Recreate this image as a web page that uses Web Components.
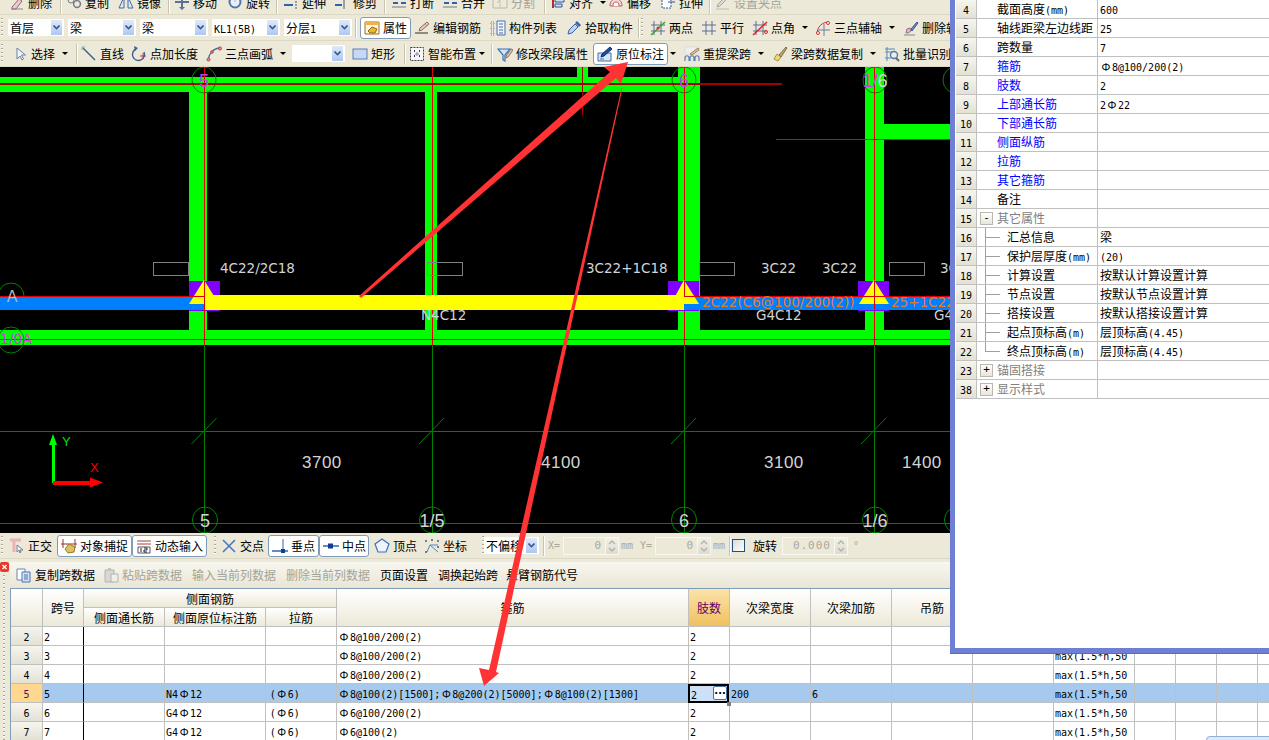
<!DOCTYPE html>
<html lang="zh">
<head>
<meta charset="utf-8">
<title>梁 原位标注</title>
<style>
  html, body { margin: 0; height: 100%; overflow: hidden; background: #ece9d8; }
  body { font: 12px "Noto Sans CJK SC", sans-serif; color: #000; }
</style>
</head>
<body>
<cad-app></cad-app>
<script>
// half width latin like the app's bitmap font, full width rebar sign
const TXT_CSS = `
  .n { font: 10px "DejaVu Sans Mono", monospace; white-space: pre; }
  .bar { display: inline-block; width: 12px; text-align: center; font-size: 11px; }
`;
const fmt = s => s
    .replace(/[\x20-\x7e]+/g, m => `<span class="n">${m}</span>`)
    .replace(/Φ/g, '<span class="bar">Φ</span>');

const ICONS = {
    erase: '<path d="M3 13l7-8 3 2-6 8H3z" fill="#f3c6d0" stroke="#8a6a7a"/><path d="M2 15h12" stroke="#888"/>',
    clip: '<circle cx="5" cy="6" r="3" fill="none" stroke="#778"/><circle cx="11" cy="10" r="3.4" fill="none" stroke="#778" stroke-width="1.5"/>',
    mirror: '<path d="M1 14L6 3v11zM15 14L10 3v11z" fill="#dfe8f5" stroke="#46699c"/>',
    move: '<path d="M8 1v14M1 8h14" stroke="#5a7199" stroke-width="2"/><path d="M8 0l3 3H5zM8 16l3-3H5z" fill="#5a7199"/>',
    rotate: '<circle cx="8" cy="8" r="5.5" fill="#e8eefa" stroke="#5577aa" stroke-width="2"/><path d="M8 3v5" stroke="#d9a" stroke-width="1"/>',
    extend: '<path d="M1 5h9M1 11h9" stroke="#3060b0" stroke-width="2"/><path d="M13 1v14" stroke="#556" stroke-dasharray="2 1"/>',
    trim: '<path d="M1 5h7M1 11h7" stroke="#3060b0" stroke-width="2"/><path d="M10 1v14M14 5h-3" stroke="#556"/>',
    brk: '<path d="M1 4h14M1 13h14" stroke="#778" stroke-width="1"/><path d="M2 9h5M10 9h5" stroke="#3060b0" stroke-width="2"/>',
    split: '<path d="M1 4h14v10H1zM5 9l6-6" fill="none" stroke="#b8b8b0"/><path d="M8 1v14" stroke="#c4c4bc"/>',
    align: '<path d="M3 2v12" stroke="#b03030" stroke-width="2"/><path d="M5 5h9v3H5zM5 10h7v3H5z" fill="#cfe0f5" stroke="#2f55a0"/>',
    offset: '<path d="M2 12c0-5 3-7 6-7s6 2 6 7z" fill="#f6d8d8" stroke="#c06060"/><path d="M5 12c0-3 1-4 3-4s3 1 3 4" fill="#fff" stroke="#c06060"/>',
    stretch: '<path d="M2 2h9v12H2z" fill="#fff" stroke="#2f55a0" stroke-dasharray="2 1"/><path d="M8 8h7" stroke="#2f55a0"/>',
    grippoint: '<path d="M2 13l3-1 8-8-2-2-8 8z" fill="#d8d8d0" stroke="#aaa"/><path d="M1 15h13" stroke="#bbb"/>',
    prop: '<path d="M1 2h14v12H1z" fill="#fff6e0" stroke="#a06a20"/><path d="M1 2h14v3H1z" fill="#f0b050"/><path d="M4 11l4-4 5 2-2 4H6z" fill="#e8b830" stroke="#8a6a10"/>',
    editbar: '<path d="M1 13h13" stroke="#665" stroke-width="1.4"/><path d="M5 11l1-3 7-6 2 2-7 6z" fill="#f0c8b8" stroke="#887060"/><path d="M11 4l2 2" stroke="#c99030"/>',
    list: '<path d="M7 1h8v14H7z" fill="#eef3fb" stroke="#4a6ea8"/><path d="M9 4h4M9 7h4M9 10h4M9 13h4" stroke="#4a6ea8"/><path d="M1 2h3v3H1zM1 7h3v3H1zM1 12h3v3H1z" fill="none" stroke="#6a7f9f" stroke-dasharray="1 1"/>',
    pick: '<path d="M2 14l1-4 6-6 3 3-6 6z" fill="#bcd3f2" stroke="#3a64a8"/><path d="M9 3l2-2 4 4-2 2z" fill="#3a64a8"/>',
    twopt: '<path d="M4 1v14M11 1v14M1 5h14M1 11h14" stroke="#5a6d99"/><path d="M1 15L15 2" stroke="#40a030" stroke-width="1.5"/><circle cx="8" cy="8" r="1.5" fill="#d03030"/>',
    parallel: '<path d="M5 1v14M11 1v14M1 5h14M1 11h14" stroke="#5a6d99"/>',
    ptangle: '<path d="M4 1v14M11 1v14M1 5h14M1 11h14" stroke="#5a6d99"/><path d="M1 15L15 2" stroke="#e02020" stroke-width="1.4"/><circle cx="14" cy="12" r="1.5" fill="none" stroke="#e02020"/>',
    arcaxis: '<path d="M2 14C2 7 7 2 14 2" fill="none" stroke="#d83030"/><circle cx="3" cy="13" r="1.5" fill="#fff" stroke="#d83030"/><circle cx="13" cy="3" r="1.5" fill="#fff" stroke="#d83030"/><path d="M9 4v12M3 10h12" stroke="#6a7fa8"/>',
    brush: '<path d="M1 15h11" stroke="#888"/><path d="M3 13l1-4 3-1 1 3-3 2z" fill="#e8b8c8" stroke="#907080"/><path d="M8 9l6-7 1 1-6 8z" fill="#7088b8" stroke="#405a90"/>',
    cursor: '<path d="M5 2v11l3-3 2 4 1.500-1-2-4h4z" fill="#f4f6fb" stroke="#6a7fa8"/>',
    line: '<path d="M2 2l12 12" stroke="#3d5f90" stroke-width="1.4"/><path d="M1 4V1h3" fill="none" stroke="#8aa"/>',
    addlen: '<path d="M13 6a6 6 0 1 1-8-3" fill="none" stroke="#3d5f90" stroke-width="1.4"/><path d="M3 0l4 2-3 3z" fill="#3d5f90"/><path d="M9 10h6M12 7v6" stroke="#b04040"/>',
    arc: '<path d="M2 14C3 7 8 2 14 2" fill="none" stroke="#3d6fa0" stroke-width="1.3"/><circle cx="2.500" cy="13.500" r="1.500" fill="#e89090" stroke="#c04040"/><circle cx="14" cy="2.500" r="1.500" fill="#e89090" stroke="#c04040"/><circle cx="6" cy="6" r="1.300" fill="#e89090" stroke="#c04040"/>',
    rect: '<rect x="1" y="3" width="14" height="10" fill="#c6d8f4" stroke="#5a80b8"/>',
    smart: '<rect x="1.500" y="1.500" width="13" height="13" fill="#f8f8f8" stroke="#445" stroke-dasharray="2 1"/><path d="M5 5h1M10 5h1M5 10h1M10 10h1" stroke="#335" stroke-width="2"/><path d="M8 6v4M6 8h4" stroke="#88a"/>',
    funnel: '<path d="M1 3h12L8 9v6l-2-1V9z" fill="#cfe2f7" stroke="#3d74b0" stroke-width="1.200"/><path d="M9 10l5-7 2 1-5 7-2 1z" fill="#e8c8b8" stroke="#887060"/>',
    inplace: '<path d="M1 7h13v8H1z" fill="#d8e5f8" stroke="#456da8"/><path d="M4 11l1-3 8-7 2 2-8 7z" fill="#1d4fa0" stroke="#0f3070"/><path d="M3 13h4" stroke="#456da8"/>',
    respan: '<path d="M1 15v-3c0-3 4-3 4 0v3M6 15v-3c0-3 4-3 4 0v3M11 15v-3c0-3 4-3 4 0v3" fill="none" stroke="#5a80b8" stroke-width="1.200"/><path d="M1 1h14v7H1z" fill="#eee" stroke="#ddd"/><path d="M6 8l8-6 1 2-7 5z" fill="#e8c090" stroke="#a08060"/>',
    copyspan: '<path d="M2 13l3-5 4 3-3 4z" fill="#f0d878" stroke="#a89040"/><path d="M7 9l7-8 1 1-6 9z" fill="#b8a878" stroke="#807048"/>',
    batch: '<path d="M1 3h10M1 6h7M1 12h6M3 1v14" stroke="#5a88b8"/><circle cx="10" cy="9" r="3.500" fill="#e8eef6" stroke="#5a7898" stroke-width="1.400"/><path d="M12 12l3 3" stroke="#667" stroke-width="2"/>',
    ortho: '<path d="M1 2h11M5 2v12" stroke="#e8b4b4" stroke-width="3"/><path d="M8 7v7l2-2 1 3 1-1-1-2h3z" fill="#f4f6fb" stroke="#78808c"/>',
    snap: '<path d="M2 1v9M14 1v9M0 6h16" stroke="#a03028"/><path d="M4 11l4-5 6 3-1 5-6 1z" fill="#e0c060" stroke="#907820"/>',
    dyn: '<path d="M1 3h14M1 6h14" stroke="#b04038"/><path d="M2 9h12v6H2z" fill="#fff" stroke="#556"/><path d="M5 10v4M8 10h3v2H8v2h3" fill="none" stroke="#223" stroke-width="1"/>',
    cross: '<path d="M2 2l12 12M14 2L2 14" stroke="#4a78c8" stroke-width="1.600"/>',
    perp: '<path d="M0 13h16" stroke="#2f62b8" stroke-width="1.500"/><path d="M11 1v12" stroke="#2f62b8"/><rect x="9" y="11" width="4" height="4" fill="#123e90"/>',
    mid: '<path d="M0 8h16" stroke="#2f62b8" stroke-width="1.500"/><rect x="5" y="5.500" width="5" height="5" fill="#123e90"/>',
    vertex: '<path d="M8 1l7 5-3 8H4L1 6z" fill="#eef4fc" stroke="#3d6fc0" stroke-width="1.200"/>',
    coord: '<path d="M3 14l3-7 8 7M6 7h8" fill="none" stroke="#4a88d0"/><circle cx="2" cy="3" r="1" fill="#556"/><circle cx="2" cy="14" r="1" fill="#556"/><circle cx="8" cy="2" r="1" fill="#556"/><circle cx="14" cy="3" r="1" fill="#556"/><circle cx="14" cy="9" r="1" fill="#556"/>',
    copydoc: '<path d="M1 2h8v11H1z" fill="#fff" stroke="#6a86b0"/><path d="M6 5h8v10H6z" fill="#d4e4f8" stroke="#4a72b0"/><path d="M8 8h4M8 10h4M8 12h4" stroke="#4a72b0"/>',
    pastedoc: '<path d="M2 3h9v12H2z" fill="#d8d8d2" stroke="#b4b4ae"/><path d="M5 1h3v3H5z" fill="#c4c4be"/><path d="M8 7h7v8H8z" fill="#eeeeea" stroke="#b4b4ae"/>'
};

class ToolBar extends HTMLElement {
    constructor() {
        super();
        this.attachShadow({ mode: 'open' });
    }
    connectedCallback() {
        this.shadowRoot.innerHTML = `
      <style>
        :host {
          display: flex;
          flex: none;
          align-items: center;
          height: var(--bar-h, 25px);
          overflow: hidden;
          background: #ece9d8;
          border-bottom: 1px solid #dcd8c4;
          box-sizing: border-box;
        }
        :host([cut]) { align-items: flex-end; }
      </style>
      <slot></slot>
    `;
    }
}

class ToolSep extends HTMLElement {
    constructor() {
        super();
        this.attachShadow({ mode: 'open' });
    }
    connectedCallback() {
        const w = this.getAttribute('w') || 8;
        this.shadowRoot.innerHTML = `
      <style>
        :host { display: flex; flex: none; justify-content: center; height: 20px; width: ${w}px; }
        i { width: 1px; background: #c8c4b0; border-right: 1px solid #fff; }
      </style>
      <i></i>
    `;
    }
}

class ToolGrip extends HTMLElement {
    constructor() {
        super();
        this.attachShadow({ mode: 'open' });
    }
    connectedCallback() {
        const w = this.getAttribute('w') || 8;
        this.shadowRoot.innerHTML = `
      <style>
        :host { display: flex; flex: none; justify-content: var(--grip-at, flex-start); height: 19px; width: ${w}px; }
        i { width: 2px; margin-left: 1px; background: repeating-linear-gradient(#a8a490 0 1px, #fff 1px 2px, transparent 2px 4px); }
      </style>
      <i></i>
    `;
    }
}

class ToolButton extends HTMLElement {
    constructor() {
        super();
        this.attachShadow({ mode: 'open' });
    }
    connectedCallback() {
        const icon = this.getAttribute('icon');
        const w = this.getAttribute('w');
        this.shadowRoot.innerHTML = `
      <style>
        :host {
          display: flex;
          flex: none;
          align-items: center;
          box-sizing: border-box;
          height: 21px;
          white-space: nowrap;
          ${w ? `width: ${w}px;` : ''}
        }
        :host([cut]) { height: 24px; }
        :host([on]) {
          height: 22px;
          padding-left: 3px;
          background: #fff;
          border: 1px solid #7f9db9;
          border-radius: 3px;
        }
        :host([off]) { color: #a4a498; }
        svg { flex: none; width: 16px; height: 16px; margin-right: 3px; }
        .caret {
          flex: none;
          margin-left: var(--caret-gap, 7px);
          border: 3px solid transparent;
          border-top: 3px solid #000;
          border-bottom: 0;
        }
      </style>
      ${icon ? `<svg viewBox="0 0 16 16">${ICONS[icon]}</svg>` : ''}
      <slot></slot>
      ${this.hasAttribute('caret') ? '<span class="caret"></span>' : ''}
    `;
    }
}

class ComboBox extends HTMLElement {
    constructor() {
        super();
        this.attachShadow({ mode: 'open' });
    }
    connectedCallback() {
        this.shadowRoot.innerHTML = `
      <style>
        ${TXT_CSS}
        :host {
          display: flex;
          flex: none;
          box-sizing: border-box;
          align-items: center;
          justify-content: space-between;
          width: ${this.getAttribute('w') || 68}px;
          height: 17px;
          padding: 0 2px 0 2px;
          background: #fff;
          overflow: hidden;
        }
        b {
          display: flex;
          flex: none;
          align-items: center;
          justify-content: center;
          width: 11px;
          height: 15px;
          background: linear-gradient(#dfe9fb, #aec7f0);
        }
      </style>
      <span>${fmt(this.getAttribute('value') || '')}</span>
      <b><svg width="7" height="5" viewBox="0 0 7 5"><path d="M.5.500l3 3 3-3" fill="none" stroke="#3a5a90" stroke-width="1.600"/></svg></b>
    `;
    }
}

class NumField extends HTMLElement {
    constructor() {
        super();
        this.attachShadow({ mode: 'open' });
    }
    connectedCallback() {
        this.shadowRoot.innerHTML = `
      <style>
        :host {
          display: flex;
          flex: none;
          box-sizing: border-box;
          width: ${this.getAttribute('w') || 56}px;
          height: 18px;
          border: 1px solid #f8f7f0;
          color: #a8a89c;
          font: 11px "DejaVu Sans Mono", monospace;
          letter-spacing: 1px;
        }
        span { flex: 1; text-align: right; padding-right: 3px; line-height: 15px; }
        svg { flex: none; width: 12px; height: 16px; background: linear-gradient(#f2f1e8, #dedcd0); border-left: 1px solid #f8f7f0; }
      </style>
      <span>${this.getAttribute('value')}</span>
      <svg viewBox="0 0 12 16"><path d="M3 6l3-3 3 3M3 10l3 3 3-3" fill="none" stroke="#b4b4a8" stroke-width="1.500"/></svg>
    `;
    }
}

class CadCanvas extends HTMLElement {
    constructor() {
        super();
        this.attachShadow({ mode: 'open' });
    }
    connectedCallback() {
        const axes = [204.5, 432, 684, 874];
        const purple = [189, 668, 858];
        const tris = [[204, 189, 219], [684, 671, 699], [874, 859, 889]];
        const labels = [
            [220, 273, '4C22/2C18'], [586, 273, '3C22+1C18'], [761, 273, '3C22'], [822, 273, '3C22'],
            [940, 273, '3C'], [421, 320, 'N4C12'], [756, 320, 'G4C12'], [934, 320, 'G4C']
        ];
        const boxes = [153, 427, 699, 889];
        const dims = [[302, '3700'], [541, '4100'], [764, '3100'], [902, '1400']];
        const bottom = [[205, '5'], [432, '1/5'], [684, '6'], [875, '1/6'], [957, '']];
        this.shadowRoot.innerHTML = `
      <style>
        :host { display: block; flex: none; height: 466px; background: #000; overflow: hidden; }
        svg { display: block; }
        text { font-family: "DejaVu Sans", sans-serif; font-size: 13.5px; fill: #d4d4d4; }
        .dim { font-family: "Liberation Sans", sans-serif; font-size: 17px; letter-spacing: .5px; }
        .ax { font-family: "Liberation Sans", sans-serif; font-size: 18px; text-anchor: middle; }
      </style>
      <svg width="1269" height="466" viewBox="0 67 1269 466" shape-rendering="crispEdges">
        <g fill="#00ff00">
          <rect x="0" y="77" width="700" height="15"/>
          <rect x="0" y="330" width="950" height="15"/>
          <rect x="189" y="92" width="18" height="238"/>
          <rect x="425" y="92" width="12" height="238"/>
          <rect x="678" y="67" width="22" height="263"/>
          <rect x="865" y="67" width="19" height="263"/>
          <rect x="884" y="124" width="70" height="15"/>
          <rect x="577" y="67" width="11" height="10"/>
        </g>
        <g stroke="#008000" fill="none">
          ${axes.map(x => `<path d="M${x} 345V533"/>`).join('')}
          <path d="M0 431.500H950M0 523.500H950"/>
        </g>
        <g stroke="#008000" fill="none" shape-rendering="auto">
          ${axes.map(x => `<path d="M${x - 13} 444L${x + 12} 418"/>`).join('')}
          ${bottom.map(a => `<ellipse cx="${a[0]}" cy="520" rx="12.500" ry="13"/>`).join('')}
          ${[204, 684, 875].map(x => `<ellipse cx="${x}" cy="80" rx="12" ry="13"/>`).join('')}
          <ellipse cx="11" cy="296" rx="13" ry="13"/>
          <ellipse cx="11" cy="340" rx="13" ry="13"/>
          <ellipse cx="955" cy="80" rx="12" ry="13"/>
        </g>
        <g fill="none" stroke="#e00000">
          ${axes.map(x => `<path d="M${x} 67V345"/>`).join('')}
          <path d="M0 339.500H950"/>
          <path d="M776 139.500H950"/>
        </g>
        <path d="M0 84H782" stroke="#a00000" stroke-width="2"/>
        <path d="M582.500 67V115" stroke="#a00000"/>
        ${boxes.map(x => `<rect x="${x + .5}" y="262.500" width="35" height="13" fill="none" stroke="#808080"/>`).join('')}
        ${purple.map(x => `<rect x="${x}" y="281" width="31" height="30" fill="#8000ff"/>`).join('')}
        <rect x="0" y="296" width="204" height="14" fill="#0080ff"/>
        <rect x="684" y="296" width="270" height="14" fill="#0080ff"/>
        <rect x="204" y="295" width="480" height="15" fill="#ffff00"/>
        <g shape-rendering="auto">
          ${tris.map(t => `<path d="M${t[0]} 280L${t[2]} 304H${t[1]}z" fill="#ffff00"/>`).join('')}
        </g>
        <path d="M0 296.500H204M684 296.500H954" stroke="#e00000"/>
        <path d="M204.500 281V340M684 281V296M874 281V310" stroke="#e00000"/>
        <text x="702" y="307" style="fill:#e8781e">2C22(C6@100/200(2))</text>
        <text x="891" y="307" style="fill:#e8781e">25+1C22</text>
        ${labels.map(l => `<text x="${l[0]}" y="${l[1]}">${l[2]}</text>`).join('')}
        ${dims.map(d => `<text class="dim" x="${d[0]}" y="468">${d[1]}</text>`).join('')}
        ${bottom.map(a => `<text class="ax" x="${a[0]}" y="527">${a[1]}</text>`).join('')}
        <text class="ax" x="204" y="87" style="fill:#c840e0">5</text>
        <text class="ax" x="684" y="87" style="fill:#c840e0">6</text>
        <text class="ax" x="875" y="87" style="fill:#c840e0">1/<tspan style="fill:#d4d4d4">6</tspan></text>
        <text class="ax" x="12" y="302" style="font-size:16px;fill:#b8b8b8">A</text>
        <text x="0" y="344" style="fill:#d040d8;font-size:14px">1/0A</text>
        <path d="M53 483V442" stroke="#00ff00" stroke-width="3"/>
        <path d="M53 434l-4 11h8z" fill="#00ff00" shape-rendering="auto"/>
        <path d="M53 482.500H92" stroke="#ff0000" stroke-width="4"/>
        <path d="M103 482.500l-13-5v10z" fill="#ff0000" shape-rendering="auto"/>
        <text x="62" y="446" style="fill:#00e000;font:13px 'Liberation Sans',sans-serif">Y</text>
        <text x="90" y="472" style="fill:#f00000;font:13px 'Liberation Sans',sans-serif">X</text>
      </svg>
    `;
    }
}

class PropPanel extends HTMLElement {
    constructor() {
        super();
        this.attachShadow({ mode: 'open' });
    }
    connectedCallback() {
        const rows = [
            [4, '截面高度(mm)', '600'],
            [5, '轴线距梁左边线距', '25'],
            [6, '跨数量', '7'],
            [7, '箍筋', 'Φ8@100/200(2)', 'b'],
            [8, '肢数', '2', 'b'],
            [9, '上部通长筋', '2Φ22', 'b'],
            [10, '下部通长筋', '', 'b'],
            [11, '侧面纵筋', '', 'b'],
            [12, '拉筋', '', 'b'],
            [13, '其它箍筋', '', 'b'],
            [14, '备注', ''],
            [15, '其它属性', '', 'g-'],
            [16, '汇总信息', '梁', 't'],
            [17, '保护层厚度(mm)', '(20)', 't'],
            [18, '计算设置', '按默认计算设置计算', 't'],
            [19, '节点设置', '按默认节点设置计算', 't'],
            [20, '搭接设置', '按默认搭接设置计算', 't'],
            [21, '起点顶标高(m)', '层顶标高(4.45)', 't'],
            [22, '终点顶标高(m)', '层顶标高(4.45)', 'e'],
            [23, '锚固搭接', '', 'g+'],
            [38, '显示样式', '', 'g+']
        ];
        this.shadowRoot.innerHTML = `
      <style>
        ${TXT_CSS}
        :host {
          position: absolute;
          left: 950px;
          top: 0;
          width: 330px;
          height: 653px;
          box-sizing: border-box;
          background: #fff;
          border-left: 5px solid #6f80d4;
          border-bottom: 5px solid #6f80d4;
          box-shadow: 0 1px 0 #5a6ac0;
          overflow: hidden;
        }
        table { border-collapse: separate; border-spacing: 0; table-layout: fixed; width: 314px; margin-left: 1px; }
        td { height: 19px; box-sizing: border-box; padding: 0; border-bottom: 1px solid #c0c0c0; border-right: 1px solid #c0c0c0; white-space: nowrap; overflow: hidden; line-height: 17px; vertical-align: top; position: relative; }
        .h { background: linear-gradient(#f6f5ee, #e3e1d4); text-align: center; }
        .name { padding-left: 20px; }
        .val { padding-left: 2px; border-right: 0; }
        .b { color: #0000ff; }
        .g, .g .n { color: #808080; }
        .t { padding-left: 30px; }
        .box { position: absolute; left: 3px; top: 3px; width: 11px; height: 11px; border: 1px solid #b8b8b0; background: linear-gradient(#fff, #e8e6da); color: #000; font: 11px/10px "DejaVu Sans Mono", monospace; text-align: center; }
        .t::before { content: ""; position: absolute; left: 8px; top: 0; bottom: 0; border-left: 1px solid #a0a0a0; }
        .t::after { content: ""; position: absolute; left: 8px; top: 9px; width: 15px; border-top: 1px solid #a0a0a0; }
        .last::before { bottom: 9px; }
      </style>
      <table>
        <colgroup><col style="width:21px"><col style="width:121px"><col></colgroup>
        ${rows.map(r => {
            const k = r[3] || '';
            const group = k.startsWith('g');
            const tree = k === 't' || k === 'e';
            const cls = ['name', k === 'b' ? 'b' : '', group ? 'g' : '', tree ? 't' : '', k === 'e' ? 'last' : ''].join(' ');
            return `<tr>
              <td class="h">${fmt(String(r[0]))}</td>
              <td class="${cls}">${group ? `<span class="box">${k[1]}</span>` : ''}${fmt(r[1])}</td>
              <td class="val">${fmt(r[2])}</td>
            </tr>`;
        }).join('')}
      </table>
    `;
    }
}

class DataGrid extends HTMLElement {
    constructor() {
        super();
        this.attachShadow({ mode: 'open' });
    }
    connectedCallback() {
        const widths = [32, 41, 81, 101, 71, 352, 41, 81, 81, 81, 81, 81, 41, 41, 41, 41];
        const rows = [
            [2, '', '', 'Φ8@100/200(2)', '', ''],
            [3, '', '', 'Φ8@100/200(2)', '', ''],
            [4, '', '', 'Φ8@100/200(2)', '', ''],
            [5, 'N4Φ12', '(Φ6)', 'Φ8@100(2)[1500];Φ8@200(2)[5000];Φ8@100(2)[1300]', '200', '6'],
            [6, 'G4Φ12', '(Φ6)', 'Φ6@100/200(2)', '', ''],
            [7, 'G4Φ12', '(Φ6)', 'Φ6@100(2)', '', '']
        ];
        this.shadowRoot.innerHTML = `
      <style>
        ${TXT_CSS}
        :host {
          display: block;
          flex: 1;
          overflow: hidden;
          background: #fff;
          border-top: 1px solid #7f9db9;
          border-left: 1px solid #7f9db9;
        }
        table { border-collapse: separate; border-spacing: 0; table-layout: fixed; width: ${widths.reduce((a, b) => a + b, 0)}px; }
        td, th { box-sizing: border-box; height: 19px; padding: 0 0 0 1px; border-right: 1px solid #c0c0c0; border-bottom: 1px solid #c0c0c0; white-space: nowrap; overflow: hidden; font-weight: normal; line-height: 17px; position: relative; text-align: left; }
        td { vertical-align: top; }
        th { text-align: center; padding: 0; background: linear-gradient(#fff, #ece9d8); }
        .hot { background: linear-gradient(#fbe3a8, #f0c060); color: #60006a; }
        .no { padding: 0; text-align: center; background: linear-gradient(#f6f5ee, #e3e1d4); }
        .sel td { background: #a6caee; }
        .sel td.no { background: #ffd78f; color: #60006a; }
        .span { border-right-color: #000; }
        .cur { position: absolute; inset: 0 0 -1px -1px; box-sizing: border-box; border: 2px solid #000; background: #cde0f6; line-height: 15px; padding-left: 1px; }
        .dots { position: absolute; right: 0; top: 0; width: 14px; height: 14px; box-sizing: border-box; border: 1px solid #4a72a8; border-radius: 2px; background: #fff; font: bold 10px/7px "DejaVu Sans", sans-serif; text-align: center; }
        .grab { position: absolute; left: 37px; top: 16px; width: 4px; height: 4px; background: #808080; }
        td:has(.cur) { overflow: visible; z-index: 1; }
      </style>
      <table>
        <colgroup>${widths.map(w => `<col style="width:${w}px">`).join('')}</colgroup>
        <tr>
          <th rowspan="2"></th>
          <th rowspan="2">跨号</th>
          <th colspan="3">侧面钢筋</th>
          <th rowspan="2">箍筋</th>
          <th rowspan="2" class="hot">肢数</th>
          <th rowspan="2">次梁宽度</th>
          <th rowspan="2">次梁加筋</th>
          <th rowspan="2">吊筋</th>
          <th rowspan="2"></th><th rowspan="2"></th><th rowspan="2"></th><th rowspan="2"></th><th rowspan="2"></th><th rowspan="2"></th>
        </tr>
        <tr><th>侧面通长筋</th><th>侧面原位标注筋</th><th>拉筋</th></tr>
        ${rows.map(r => {
            const sel = r[0] === 5;
            return `<tr class="${sel ? 'sel' : ''}">
              <td class="no">${fmt(String(r[0]))}</td>
              <td class="span">${fmt(String(r[0]))}</td>
              <td></td>
              <td>${fmt(r[1])}</td>
              <td>${r[2] ? '&nbsp;' + fmt(r[2]) : ''}</td>
              <td>${fmt(r[3])}</td>
              <td>${sel
                ? `<div class="cur">${fmt('2')}<span class="dots">...</span><span class="grab"></span></div>`
                : fmt('2')}</td>
              <td>${fmt(r[4])}</td>
              <td>${fmt(r[5])}</td>
              <td></td><td></td>
              <td>${fmt('max(1.5*h,50')}</td>
              <td></td><td></td><td></td><td></td>
            </tr>`;
        }).join('')}
      </table>
    `;
    }
}

class RedArrows extends HTMLElement {
    constructor() {
        super();
        this.attachShadow({ mode: 'open' });
    }
    connectedCallback() {
        this.shadowRoot.innerHTML = `
      <style>
        :host { position: absolute; left: 0; top: 0; width: 1269px; height: 740px; pointer-events: none; }
        svg { display: block; }
      </style>
      <svg width="1269" height="740">
        <polygon fill="#ff3333" points="359,296 610,72 604,67 628,62 621,84 616,78 361,298"/>
        <polygon fill="#ff3333" points="621.500,88 622.500,88 496,672 499,673 484,686 479,668 489,670"/>
      </svg>
    `;
    }
}

class CadApp extends HTMLElement {
    constructor() {
        super();
        this.attachShadow({ mode: 'open' });
    }
    connectedCallback() {
        this.shadowRoot.innerHTML = `
      <style>
        ${TXT_CSS}
        :host { display: flex; flex-direction: column; position: relative; width: 1269px; height: 740px; overflow: hidden; background: #ece9d8; }
        .lab { flex: none; color: #a8a89c; font: 10px "DejaVu Sans Mono", monospace; }
        .check { flex: none; width: 13px; height: 13px; box-sizing: border-box; margin-right: 8px; border: 1px solid #1c5180; background: linear-gradient(135deg, #dcdcd4, #fff); }
        .lower { display: flex; flex: 1; min-height: 0; margin-top: 3px; }
        .strip { flex: none; width: 10px; display: flex; flex-direction: column; }
        .close { display: block; flex: none; }
        .strip tool-grip { margin: 3px 0 0 2px; height: 165px; --grip-at: flex-start; }
        .main { flex: 1; min-width: 0; display: flex; flex-direction: column; }
        .t1 { --bar-h: 15px; padding-left: 9px; }
        .t2 { --bar-h: 26px; }
        .t3 { --bar-h: 26px; }
        .t4 { --bar-h: 26px; }
        .t5 { --bar-h: 26px; padding: 0 0 1px 6px; border-bottom: 0; background: linear-gradient(#f8f7f0, #e9e6d6); }
        .corner { position: absolute; left: 1206px; top: 736px; width: 70px; height: 10px; background: #dfe9f8; border: 1px solid #8fb0dc; border-radius: 4px 0 0 0; box-sizing: border-box; }
        .gap4 { margin-left: 4px; }
      </style>
      <tool-bar class="t1" cut>
        <tool-button cut icon="erase" w="47">删除</tool-button><tool-sep w="10"></tool-sep>
        <tool-button cut icon="clip" w="52">复制</tool-button>
        <tool-button cut icon="mirror" w="46">镜像</tool-button><tool-sep w="10"></tool-sep>
        <tool-button cut icon="move" w="53">移动</tool-button>
        <tool-button cut icon="rotate" w="44">旋转</tool-button><tool-sep w="12"></tool-sep>
        <tool-button cut icon="extend" w="51">延伸</tool-button>
        <tool-button cut icon="trim" w="44">修剪</tool-button><tool-sep w="13"></tool-sep>
        <tool-button cut icon="brk" w="51">打断</tool-button>
        <tool-button cut icon="brk" w="50">合并</tool-button>
        <tool-button cut off icon="split" w="47">分割</tool-button><tool-sep w="11"></tool-sep>
        <tool-button cut icon="align" w="58" caret>对齐</tool-button>
        <tool-button cut icon="offset" w="52">偏移</tool-button>
        <tool-button cut icon="stretch" w="45">拉伸</tool-button><tool-sep w="10"></tool-sep>
        <tool-button cut off icon="grippoint" w="74">设置夹点</tool-button>
      </tool-bar>
      <tool-bar class="t2">
        <tool-grip w="8"></tool-grip>
        <combo-box w="56" value="首层"></combo-box>
        <combo-box class="gap4" value="梁"></combo-box>
        <combo-box class="gap4" value="梁"></combo-box>
        <combo-box class="gap4" value="KL1(5B)"></combo-box>
        <combo-box class="gap4" value="分层1"></combo-box>
        <tool-sep w="8"></tool-sep>
        <tool-button on icon="prop" w="51">属性</tool-button>
        <tool-button icon="editbar" w="79" style="margin-left:3px">编辑钢筋</tool-button>
        <tool-button icon="list" w="76" style="margin-left:-3px">构件列表</tool-button>
        <tool-button icon="pick" w="71">拾取构件</tool-button>
        <tool-sep w="3"></tool-sep><tool-grip w="10"></tool-grip>
        <tool-button icon="twopt" w="51">两点</tool-button>
        <tool-button icon="parallel" w="51">平行</tool-button>
        <tool-button icon="ptangle" w="63" caret>点角</tool-button>
        <tool-button icon="arcaxis" w="88" caret>三点辅轴</tool-button>
        <tool-button icon="brush" w="76">删除辅轴</tool-button>
      </tool-bar>
      <tool-bar class="t3">
        <tool-grip w="12"></tool-grip>
        <tool-button icon="cursor" w="60" caret>选择</tool-button>
        <tool-sep w="9"></tool-sep>
        <tool-button icon="line" w="50">直线</tool-button>
        <tool-button icon="addlen" w="75">点加长度</tool-button>
        <tool-button icon="arc" w="86" caret>三点画弧</tool-button>
        <combo-box w="53" value=""></combo-box>
        <tool-button icon="rect" w="49" style="margin-left:7px">矩形</tool-button>
        <tool-sep w="8"></tool-sep>
        <tool-button icon="smart" w="77" caret style="--caret-gap:3px">智能布置</tool-button>
        <tool-sep w="11"></tool-sep>
        <tool-button icon="funnel" w="96">修改梁段属性</tool-button>
        <tool-button on icon="inplace" w="75">原位标注</tool-button>
        <tool-button caret w="16" style="--caret-gap:2px"></tool-button>
        <tool-button icon="respan" w="88" caret>重提梁跨</tool-button>
        <tool-button icon="copyspan" w="112" caret>梁跨数据复制</tool-button>
        <tool-button icon="batch" w="76">批量识别</tool-button>
      </tool-bar>
      <cad-canvas></cad-canvas>
      <tool-bar class="t4">
        <tool-grip w="9"></tool-grip>
        <tool-button icon="ortho" w="48">正交</tool-button>
        <tool-button on icon="snap" w="75">对象捕捉</tool-button>
        <tool-button on icon="dyn" w="75">动态输入</tool-button>
        <tool-grip w="14" style="--grip-at:center"></tool-grip>
        <tool-button icon="cross" w="47">交点</tool-button>
        <tool-button on icon="perp" w="51">垂点</tool-button>
        <tool-button on icon="mid" w="50">中点</tool-button>
        <tool-button icon="vertex" w="50" style="margin-left:5px">顶点</tool-button>
        <tool-button icon="coord" w="49">坐标</tool-button>
        <tool-grip w="11" style="--grip-at:flex-end"></tool-grip>
        <combo-box w="55" value="不偏移"></combo-box>
        <tool-sep w="9"></tool-sep>
        <span class="lab" style="width:15px">X=</span>
        <num-field w="56" value="0"></num-field>
        <span class="lab" style="width:21px;padding-left:2px;box-sizing:border-box">mm</span>
        <span class="lab" style="width:15px">Y=</span>
        <num-field w="56" value="0"></num-field>
        <span class="lab" style="width:17px;padding-left:2px;box-sizing:border-box">mm</span>
        <tool-sep w="4"></tool-sep>
        <span class="check"></span>
        <span style="flex:none;width:29px">旋转</span>
        <num-field w="66" value="0.000"></num-field>
        <span class="lab" style="padding-left:5px">°</span>
      </tool-bar>
      <div class="lower">
        <div class="strip">
          <svg class="close" width="9" height="10" viewBox="0 0 9 10"><rect width="9" height="10" rx="2" fill="#e8382c"/><path d="M2.500 3l4 4M6.500 3l-4 4" stroke="#fff" stroke-width="1.400"/></svg>
          <tool-grip w="4"></tool-grip>
        </div>
        <div class="main">
          <tool-bar class="t5">
            <tool-button icon="copydoc" w="87">复制跨数据</tool-button>
            <tool-button off icon="pastedoc" w="89">粘贴跨数据</tool-button>
            <tool-button off w="94">输入当前列数据</tool-button>
            <tool-button off w="94">删除当前列数据</tool-button>
            <tool-button w="58">页面设置</tool-button>
            <tool-button w="68">调换起始跨</tool-button>
            <tool-button w="90">悬臂钢筋代号</tool-button>
          </tool-bar>
          <data-grid></data-grid>
        </div>
      </div>
      <span class="corner"></span>
      <prop-panel></prop-panel>
      <red-arrows></red-arrows>
    `;
    }
}

customElements.define('tool-bar', ToolBar);
customElements.define('tool-sep', ToolSep);
customElements.define('tool-grip', ToolGrip);
customElements.define('tool-button', ToolButton);
customElements.define('combo-box', ComboBox);
customElements.define('num-field', NumField);
customElements.define('cad-canvas', CadCanvas);
customElements.define('prop-panel', PropPanel);
customElements.define('data-grid', DataGrid);
customElements.define('red-arrows', RedArrows);
customElements.define('cad-app', CadApp);
</script>
</body>
</html>
